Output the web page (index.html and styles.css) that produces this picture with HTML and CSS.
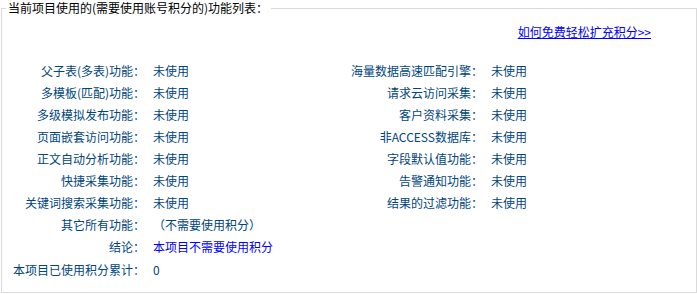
FILE: index.html
```html
<!DOCTYPE html>
<html lang="zh-CN">
<head>
    <meta charset="UTF-8">
    <title>功能列表</title>
    <link rel="stylesheet" href="styles.css">
</head>
<body>

<fieldset class="feature-box">
    <legend>当前项目使用的(需要使用账号积分的)功能列表：</legend>

    <div class="help-link">
        <a href="#">如何免费轻松扩充积分&gt;&gt;</a>
    </div>

    <div class="feature-grid">
        <span class="label">父子表(多表)功能：</span><span class="value">未使用</span>
        <span class="label">海量数据高速匹配引擎：</span><span class="value">未使用</span>

        <span class="label">多模板(匹配)功能：</span><span class="value">未使用</span>
        <span class="label">请求云访问采集：</span><span class="value">未使用</span>

        <span class="label">多级模拟发布功能：</span><span class="value">未使用</span>
        <span class="label">客户资料采集：</span><span class="value">未使用</span>

        <span class="label">页面嵌套访问功能：</span><span class="value">未使用</span>
        <span class="label">非ACCESS数据库：</span><span class="value">未使用</span>

        <span class="label">正文自动分析功能：</span><span class="value">未使用</span>
        <span class="label">字段默认值功能：</span><span class="value">未使用</span>

        <span class="label">快捷采集功能：</span><span class="value">未使用</span>
        <span class="label">告警通知功能：</span><span class="value">未使用</span>

        <span class="label">关键词搜索采集功能：</span><span class="value">未使用</span>
        <span class="label">结果的过滤功能：</span><span class="value">未使用</span>

        <span class="label">其它所有功能：</span><span class="value wide">（不需要使用积分）</span>

        <span class="label">结论：</span><span class="value wide result">本项目不需要使用积分</span>

        <span class="label total">本项目已使用积分累计：</span><span class="value wide total">0</span>
    </div>
</fieldset>

</body>
</html>
```

FILE: styles.css
```css
body {
    margin: 0;
    font-family: "Noto Sans CJK SC", "Liberation Sans", sans-serif;
    font-size: 12px;
    background-color: #fff;
}

.feature-box {
    box-sizing: border-box;
    height: 293px;
    margin: 0 0 0 1px;
    width: 696px;
    padding: 0;
    border: 1px solid #dadada;
}

.feature-box legend {
    margin-left: 4px;
    padding: 0 3px 0 2px;
    line-height: 16px;
    color: #000;
}

.help-link {
    margin-top: 5px;
    padding-right: 45px;
    line-height: 22px;
    text-align: right;
}

.help-link a {
    color: #0000ff;
    text-decoration: underline;
}

/* label / value pairs, two per row */
.feature-grid {
    display: grid;
    grid-template-columns: 135px 200px 138px auto;
    grid-auto-rows: 22px;
    margin: 17px 0 0 8px;
    line-height: 22px;
    color: #00457e;
}

.label {
    text-align: right;
    white-space: nowrap;
}

.value {
    padding-left: 8px;
    white-space: nowrap;
}

.value.wide {
    grid-column: 2 / -1;
}

.result {
    color: #0000ff;
}

.total {
    margin-top: 1px;
}
```
